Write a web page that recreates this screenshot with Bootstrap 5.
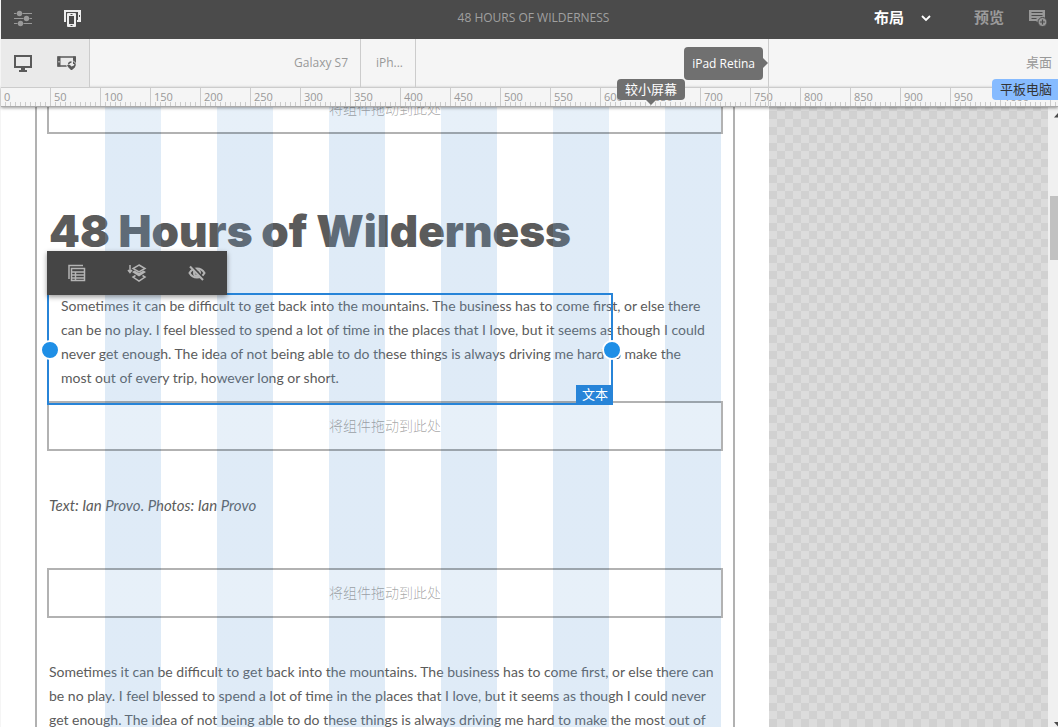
<!DOCTYPE html>
<html lang="zh-CN">
<head>
<meta charset="utf-8">
<meta name="viewport" content="width=device-width, initial-scale=1">
<title>48 Hours of Wilderness</title>
<link rel="stylesheet" href="https://cdn.jsdelivr.net/npm/bootstrap@5.3.0/dist/css/bootstrap.min.css">
<style>
  body { font-family: "Open Sans", "Noto Sans CJK SC", sans-serif; font-size: 12px; background: #f5f5f5; }
  button { border: 0; background: none; padding: 0; color: inherit; }
  svg { display: block; }
  .app { padding-left: 1px; }

  .topbar { height: 39px; background: #4b4b4b; color: #9b9b9b; padding-bottom: 4px; }
  .topbar .side { flex: 0 0 240px; }
  .topbar .side-end { flex: 0 0 232px; font-size: 15px; font-weight: 700; padding-right: 10px; }
  .doc-title { font-size: 12px; font-weight: 400; line-height: 16px; color: #a0a0a0; }

  .devices { height: 48px; color: #999; z-index: 4; }
  .modes { flex: 0 0 89px; background: #eaeaea; border-right: 1px solid #ccc; color: #5a5a5a; }
  .segment { border-right: 1px solid #ccc; text-align: right; padding-right: 12px; white-space: nowrap; }
  .seg-galaxy { flex: 0 0 271px; }
  .seg-iphone { flex: 0 0 55px; }
  .seg-ipad { flex: 0 0 353px; padding-right: 5px; height: 68px; }
  .seg-desktop { border: 0; padding-right: 6px; font-size: 13px; }
  .pill { background: #707070; color: #fff; border-radius: 4px; height: 33px; padding: 0 8px; margin-top: 8px; }
  .pill::after { content: ""; position: absolute; left: 100%; top: 11px; border: 5px solid transparent; border-left-color: #707070; border-right: 0; }
  .range { position: absolute; top: 40px; height: 21px; line-height: 20px; font-size: 13px; padding: 0 8px; border-radius: 4px; z-index: 5; }
  .range-small { right: 83px; background: #707070; color: #fff; }
  .range-small::after { content: ""; position: absolute; left: 50%; top: 100%; margin-left: -5px; border: 5px solid transparent; border-top-color: #707070; border-bottom: 0; }
  .range-tablet { right: 0; background: #86bbff; color: #333; padding-right: 6px; border-radius: 4px 0 0 4px; }

  .ruler { height: 20px; border-top: 1px solid #ccc; border-bottom: 1px solid #aaa; color: #999; font-size: 11px; line-height: 18px; overflow: hidden; z-index: 3; box-shadow: 0 1px 3px rgba(0,0,0,.4); background: #f5f5f5; }
  .ruler span { flex: 0 0 50px; padding-left: 3px; border-right: 1px solid #ccc;
    background: repeating-linear-gradient(to right, transparent 0 4px, #ccc 4px 5px) 0 100% / 100% 4px no-repeat; }

  .viewport { min-height: 0; background: repeating-conic-gradient(#dcdcdc 0 25%, #d1d1d1 0 50%) 0 4px / 16px 16px; }
  .sheet { flex: 0 0 768px; background: #fff; padding: 0 34px; }
  .artboard { border: solid #b1b1b1; border-width: 0 2px; padding: 0 12px; height: 100%; color: #5b5b5b; font-family: Lato, "Noto Sans CJK SC", sans-serif; font-size: 14px; line-height: 24px; white-space: nowrap; }
  .artboard p { margin: 0; }
  .columns { position: absolute; inset: 0 12px; z-index: 1; pointer-events: none;
    background: repeating-linear-gradient(to right, transparent 0 56px, rgba(109,164,218,.22) 56px 112px); }
  .dropzone { z-index: 2; height: 50px; margin: 0 -2px; border: 2px solid rgba(0,0,0,.3); background: rgba(255,255,255,.25); background-clip: padding-box; color: rgba(0,0,0,.36); font-weight: 300; }
  .dropzone-first { margin-top: -23px; }
  .headline { font: 900 44px/56px Inter, sans-serif; margin: 69px 0 35px; }
  .artboard .intro { padding: 0 12px; margin-bottom: 11px; }
  .artboard .credit { font-size: 15px; font-style: italic; margin: 42px 0 51px; }
  .artboard .story { margin-top: 42px; }

  .selection { position: absolute; left: -2px; top: -1px; width: 566px; height: 112px; border: 2px solid #2784d8; z-index: 3; }
  .grip { position: absolute; top: 45px; width: 20px; height: 20px; border-radius: 50%; background: #1f8fe6; border: 2px solid #fff; }
  .grip-start { left: -9px; }
  .grip-end { right: -11px; }
  .kind { position: absolute; right: -2px; bottom: -2px; height: 20px; padding: 0 5px 0 6px; background: #2784d8; color: #fff; font-size: 13px; line-height: 18px; }
  .tools { position: absolute; left: -2px; bottom: 108px; width: 180px; height: 44px; background: #454545; color: #b4b4b4; box-shadow: 0 2px 5px rgba(0,0,0,.4); }

  .scroll { flex: 0 0 10px; background: #f0f0f0; overflow: hidden; padding: 6px 0 0 2px; }
  .thumb { height: 64px; margin-top: 78px; background: #c1c1c1; }
</style>
<script src="https://cdn.jsdelivr.net/npm/bootstrap@5.3.0/dist/js/bootstrap.bundle.min.js"></script>
</head>
<body>
<div class="app d-flex flex-column vh-100 overflow-hidden">

  <header class="topbar d-flex align-items-center flex-shrink-0">
    <div class="side d-flex align-items-center">
      <button type="button" class="ms-2 ps-1" aria-label="设置">
        <svg width="20" height="18" viewBox="0 0 20 18" fill="#999" stroke="#999"><path d="M1 4.500h18M1 9.500h18M1 14.500h18" stroke="#999" stroke-width="1"/><path d="M3.500 4.500h6M10.500 9.500h6M4.500 14.500h6" stroke="#4b4b4b" stroke-width="3"/><g stroke="none"><circle cx="6.500" cy="4.500" r="2.700"/><circle cx="13.500" cy="9.500" r="2.700"/><circle cx="7.500" cy="14.500" r="2.700"/></g></svg>
      </button>
      <button type="button" class="ms-4 ps-1" aria-label="设备">
        <svg width="22" height="20" viewBox="0 0 22 20"><path d="M3 2h17v12h-5V5H6v9H3z" fill="#eee"/><path d="M15 4h2v8h-2z" fill="#4b4b4b"/><path d="M18.500 7v2" stroke="#4b4b4b"/><rect x="5" y="4" width="11" height="16" fill="#4b4b4b"/><rect x="6" y="5" width="9" height="14" rx="1" fill="#eee"/><path d="M8 8h5v8H8z" fill="#4b4b4b"/><path d="M9.500 6.500h2M9.500 17.500h2" stroke="#4b4b4b"/></svg>
      </button>
    </div>
    <h1 class="doc-title flex-grow-1 text-center m-0">48 HOURS OF WILDERNESS</h1>
    <div class="side-end d-flex align-items-center justify-content-between">
      <button type="button" class="d-flex align-items-center gap-3 text-white fw-bold ms-5">布局
        <svg width="12" height="8" viewBox="0 0 12 8"><path d="M2 2l4 4 4-4" fill="none" stroke="#fff" stroke-width="1.800"/></svg>
      </button>
      <div class="d-flex align-items-center gap-4">
        <button type="button" class="fw-bold">预览</button>
        <button type="button" aria-label="添加批注">
          <svg width="20" height="20" viewBox="0 0 20 20"><path d="M1 2h16v9h-5v5l-4-3H1z" fill="#999"/><path d="M3.500 4.500h11M3.500 7.500h11M3.500 10.500h5" stroke="#4b4b4b" stroke-width="1.200"/><circle cx="14.500" cy="14" r="4.500" fill="#999" stroke="#4b4b4b"/><path d="M12 14h5M14.500 11.500v5" stroke="#4b4b4b" stroke-width="1.200"/></svg>
        </button>
      </div>
    </div>
  </header>

  <div class="devices position-relative d-flex flex-shrink-0">
    <div class="modes d-flex align-items-center justify-content-around">
      <button type="button" aria-label="桌面">
        <svg width="18" height="17" viewBox="0 0 18 17"><path d="M1 1h16v11H1z" fill="none" stroke="currentColor" stroke-width="2"/><path d="M7 12h4v3h2v2H5v-2h2z" fill="currentColor"/></svg>
      </button>
      <button type="button" aria-label="旋转设备">
        <svg width="20" height="16" viewBox="0 0 20 16"><path d="M1 2h17v9H1z" fill="none" stroke="currentColor" stroke-width="1.500"/><path d="M2 1.500v10M17.500 1.500v10" stroke="currentColor" stroke-width="3"/><path d="M2 6v1.500" stroke="#eaeaea"/><circle cx="14.500" cy="10.500" r="5" fill="#eaeaea"/><path d="M11.500 9.500a3 3 0 0 1 3-2.500M18 9a3.500 3.500 0 0 1-3 4" fill="none" stroke="currentColor" stroke-width="1.500"/><path d="M10 10h3l1.500 1.500L18 10v2l-3 3h-1l-3-3zM16 6v3h3z" fill="currentColor"/></svg>
      </button>
    </div>
    <button type="button" class="segment seg-galaxy">Galaxy S7</button>
    <button type="button" class="segment seg-iphone">iPh...</button>
    <div class="segment seg-ipad position-relative d-flex align-items-start justify-content-end">
      <button type="button" class="pill position-relative">iPad Retina</button>
      <span class="range range-small">较小屏幕</span>
    </div>
    <button type="button" class="segment seg-desktop flex-grow-1">桌面</button>
    <span class="range range-tablet">平板电脑</span>
  </div>

  <div class="ruler position-relative d-flex flex-shrink-0" aria-hidden="true">
    <span>0</span><span>50</span><span>100</span><span>150</span><span>200</span><span>250</span><span>300</span><span>350</span><span>400</span><span>450</span><span>500</span><span>550</span><span>600</span><span>650</span><span>700</span><span>750</span><span>800</span><span>850</span><span>900</span><span>950</span><span>1000</span><span></span>
  </div>

  <main class="viewport d-flex flex-grow-1 overflow-hidden">
    <div class="sheet">
      <article class="artboard position-relative">
        <div class="d-flex flex-column">
          <div class="dropzone dropzone-first position-relative d-flex align-items-center justify-content-center">将组件拖动到此处</div>
          <h2 class="headline">48 Hours of Wilderness</h2>
          <div class="position-relative">
            <p class="intro">Sometimes it can be difficult to get back into the mountains. The business has to come first, or else there<br>can be no play. I feel blessed to spend a lot of time in the places that I love, but it seems as though I could<br>never get enough. The idea of not being able to do these things is always driving me hard to make the<br>most out of every trip, however long or short.</p>
            <div class="selection">
              <span class="grip grip-start"></span>
              <span class="grip grip-end"></span>
              <span class="kind">文本</span>
              <div class="tools d-flex align-items-center justify-content-around">
                <button type="button" aria-label="布局">
                  <svg width="20" height="18" viewBox="0 0 20 18" fill="none" stroke="currentColor"><path d="M2 15V1.500h14" stroke-width="1.500"/><path d="M4.500 4.500h13v12h-13zM4.500 8h13M4.500 11h13M4.500 14h13M8.500 8v8.500" stroke-width="1.500"/></svg>
                </button>
                <button type="button" aria-label="图层">
                  <svg width="20" height="18" viewBox="0 0 20 18" fill="none" stroke="currentColor" stroke-width="1.500"><path d="M3 1v7M1 6l2 2.500L5 6M12 1l6 3.500-6 3.500-6-3.500zM8.500 11.500L6 13l6 4 6-4-2.500-1.500"/><path d="M5 8l2.500-1.500L12 9l4.500-2.500L19 8l-7 4.500z" fill="currentColor" stroke="none"/></svg>
                </button>
                <button type="button" aria-label="隐藏">
                  <svg width="20" height="18" viewBox="0 0 20 18" fill="none" stroke="currentColor" stroke-width="2"><path d="M2.500 9C6 3 14 3 17.500 9 14 15 6 15 2.500 9z"/><circle cx="10" cy="9" r="3"/><path d="M4.500 2l13 13.500" stroke="#454545" stroke-width="2.500"/><path d="M3 2.500l13 13.500"/></svg>
                </button>
              </div>
            </div>
          </div>
          <div class="dropzone position-relative d-flex align-items-center justify-content-center">将组件拖动到此处</div>
          <p class="credit">Text: Ian Provo. Photos: Ian Provo</p>
          <div class="dropzone position-relative d-flex align-items-center justify-content-center">将组件拖动到此处</div>
          <p class="story">Sometimes it can be difficult to get back into the mountains. The business has to come first, or else there can<br>be no play. I feel blessed to spend a lot of time in the places that I love, but it seems as though I could never<br>get enough. The idea of not being able to do these things is always driving me hard to make the most out of</p>
        </div>
        <div class="columns"></div>
      </article>
    </div>
    <div class="scroll d-flex flex-column ms-auto">
      <svg class="ms-1 flex-shrink-0" width="8" height="5" viewBox="0 0 8 5"><path d="M0 4.500L4 0l4 4.500z" fill="#4b4b4b"/></svg>
      <div class="thumb"></div>
      <svg class="ms-1 mt-auto flex-shrink-0" width="8" height="5" viewBox="0 0 8 5"><path d="M0 0h8L4 4.500z" fill="#4b4b4b"/></svg>
    </div>
  </main>
</div>
</body>
</html>
